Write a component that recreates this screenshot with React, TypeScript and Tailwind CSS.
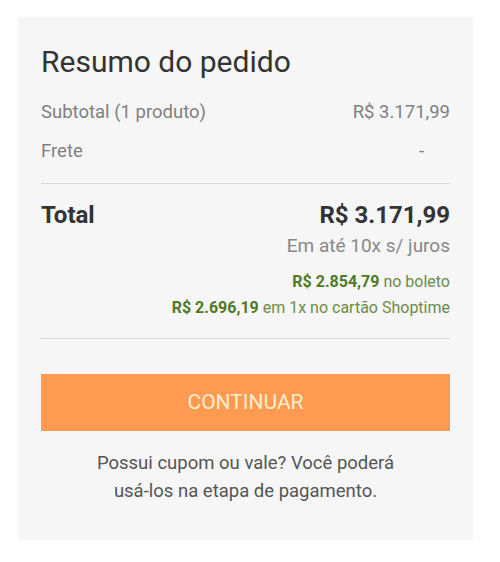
export default function App() {
  return (
    <div className="min-h-[562px] w-[500px] bg-white pt-[17px] pl-[18px] font-['Roboto',sans-serif]">
      <div className="w-[455px] h-[523px] bg-[#f6f6f6] px-[23px] pt-[27px]">
        <h1 className="text-[30px] leading-[36px] text-[#333] font-normal">Resumo do pedido</h1>

        <div className="mt-[21px] flex justify-between text-[18.5px] leading-[22px] text-[#808080]">
          <span>Subtotal (1 produto)</span>
          <span>R$ 3.171,99</span>
        </div>
        <div className="mt-[17px] flex justify-between text-[18.5px] leading-[22px] text-[#808080]">
          <span>Frete</span>
          <span className="pr-[26px]">-</span>
        </div>

        <div className="mt-[21px] border-t border-[#d6d6d6]" />

        <div className="mt-[17px] flex justify-between text-[24px] leading-[28px] font-bold text-[#333]">
          <span>Total</span>
          <span>R$ 3.171,99</span>
        </div>
        <div className="mt-[6px] text-right text-[19px] leading-[22px] text-[#888]">Em até 10x s/ juros</div>
        <div className="mt-[15px] text-right text-[16px] leading-[20px] text-[#6b8c46]">
          <span className="font-bold text-[#4f7a26]">R$ 2.854,79</span> no boleto
        </div>
        <div className="mt-[6px] text-right text-[16px] leading-[20px] text-[#6b8c46]">
          <span className="font-bold text-[#4f7a26]">R$ 2.696,19</span> em 1x no cartão Shoptime
        </div>

        <div className="mt-[20px] border-t border-[#d6d6d6]" />

        <button className="mt-[35px] w-full h-[57px] bg-[#ff9a52] text-[#ffefcc] text-[21px] uppercase">
          Continuar
        </button>

        <p className="mt-[18px] text-center text-[18.5px] leading-[28px] text-[#555]">
          Possui cupom ou vale? Você poderá
          <br />
          usá-los na etapa de pagamento.
        </p>
      </div>
    </div>
  );
}
